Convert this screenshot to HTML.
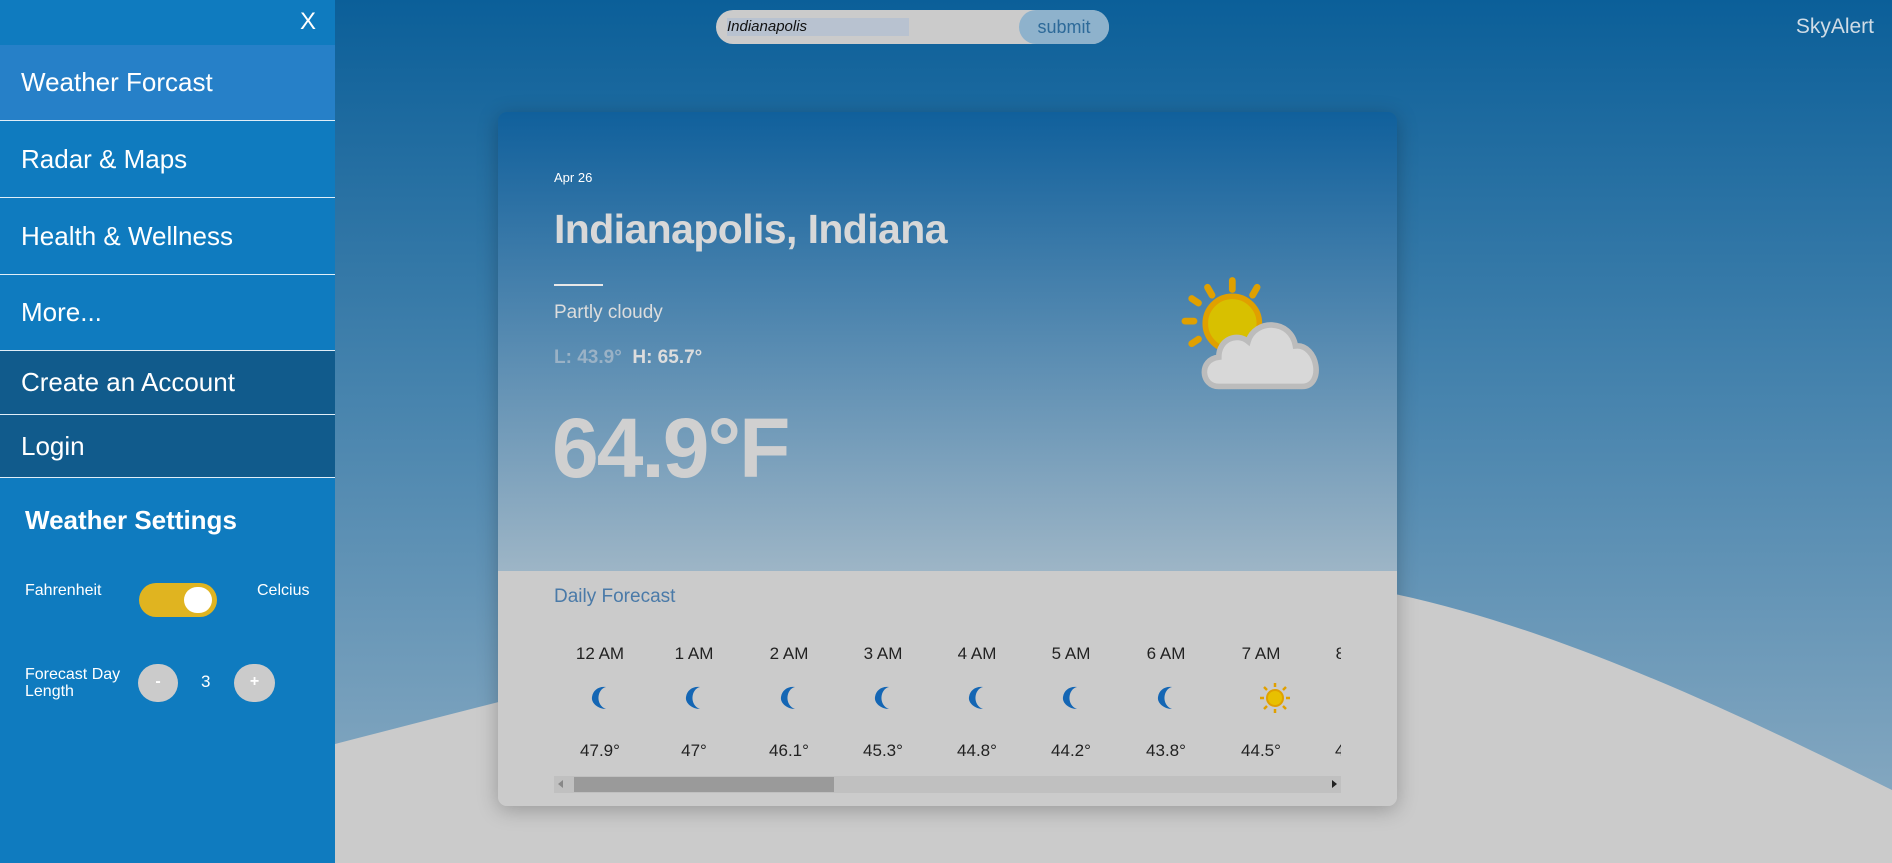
<!DOCTYPE html>
<html><head><meta charset="utf-8"><style>
*{margin:0;padding:0;box-sizing:border-box}
body{width:1892px;height:863px;overflow:hidden;position:relative;font-family:"Liberation Sans",sans-serif;background:linear-gradient(#0b5f99 0%,#3f7fab 40%,#8eadc3 100%)}
.abs{position:absolute}
#side{left:0;top:0;width:335px;height:863px;background:#0f7bbf;color:#fff}
.item{position:absolute;left:0;width:335px;border-bottom:1px solid #e0eef8;font-size:26px;padding-left:21px;display:flex;align-items:center}
.card{left:498px;top:112px;width:899px;height:694px;border-radius:9px;overflow:hidden;box-shadow:0 4px 20px rgba(0,0,0,.25)}
.top{position:absolute;left:0;top:0;width:899px;height:459px;background:linear-gradient(#10609c,#9db5c6)}
.bot{position:absolute;left:0;top:459px;width:899px;height:235px;background:#cbcbcb}
.t{position:absolute;color:#222;font-size:17px;text-align:center;width:80px}
</style></head><body>
<svg class="abs" style="left:0;top:0" width="1892" height="863"><path d="M335,744 C700,650 1000,570 1300,580 C1500,595 1750,720 1892,790 L1892,863 L335,863 Z" fill="#cbcbcb"/></svg>

<div class="abs" style="left:716px;top:10px;width:393px;height:34px;border-radius:17px;background:#cbcbcb"></div>
<div class="abs" style="left:727px;top:18px;width:182px;height:18px;background:#b8c2d0;font-style:italic;font-size:15px;line-height:18px;color:#111">Indianapolis</div>
<div class="abs" style="left:1019px;top:10px;width:90px;height:34px;border-radius:17px;background:#8eb2cc;color:#2d6a99;font-size:18px;line-height:34px;text-align:center">submit</div>
<div class="abs" style="right:18px;top:15px;color:#d0dce6;font-size:21px">SkyAlert</div>

<div class="abs card">
<div class="top"></div><div class="bot"></div>
<div class="abs" style="left:56px;top:58px;color:#fff;font-size:13px">Apr 26</div>
<div class="abs" style="left:56px;top:94px;color:#d8d8d8;font-size:41px;font-weight:bold;letter-spacing:-0.6px">Indianapolis, Indiana</div>
<div class="abs" style="left:56px;top:172px;width:49px;height:2px;background:#e8e8e8"></div>
<div class="abs" style="left:56px;top:190px;color:#ddd;font-size:19px">Partly cloudy</div>
<div class="abs" style="left:56px;top:235px;font-size:19px;font-weight:bold"><span style="color:#9ab2c6">L: 43.9°</span>&nbsp; <span style="color:#ddd">H: 65.7°</span></div>
<div class="abs" style="left:54px;top:288px;color:#d0d0d0;font-size:84px;font-weight:bold;letter-spacing:-2px">64.9°F</div>
<svg class="abs" style="left:682px;top:164px" width="170" height="124" viewBox="0 0 150 110">
<g stroke="#e0a000" stroke-width="6" stroke-linecap="round"><line x1="46" y1="4" x2="46" y2="12"/><line x1="24" y1="10" x2="28" y2="17"/><line x1="68" y1="10" x2="64" y2="17"/><line x1="4" y1="40" x2="12" y2="40"/><line x1="10" y1="20" x2="16" y2="24"/><line x1="10" y1="60" x2="16" y2="56"/></g>
<circle cx="46" cy="42" r="24" fill="#d8c000" stroke="#e0a000" stroke-width="5"/>
<path d="M34,98 C18,98 16,74 34,72 C34,56 50,50 60,58 C66,38 98,38 102,62 C122,60 128,98 108,98 Z" fill="#d8d8d8" stroke="#bcbcbc" stroke-width="5"/>
</svg>
<div class="abs" style="left:56px;top:474px;color:#4a7aa8;font-size:19px">Daily Forecast</div>
<div class="abs" style="left:56px;top:520px;width:787px;height:144px;overflow:hidden">
<div class="t" style="left:6px;top:12px">12 AM</div><div class="t" style="left:100px;top:12px">1 AM</div><div class="t" style="left:195px;top:12px">2 AM</div><div class="t" style="left:289px;top:12px">3 AM</div><div class="t" style="left:383px;top:12px">4 AM</div><div class="t" style="left:477px;top:12px">5 AM</div><div class="t" style="left:572px;top:12px">6 AM</div><div class="t" style="left:667px;top:12px">7 AM</div><div class="t" style="left:761px;top:12px">8 AM</div>
<div class="t" style="left:6px;top:109px">47.9°</div><div class="t" style="left:100px;top:109px">47°</div><div class="t" style="left:195px;top:109px">46.1°</div><div class="t" style="left:289px;top:109px">45.3°</div><div class="t" style="left:383px;top:109px">44.8°</div><div class="t" style="left:477px;top:109px">44.2°</div><div class="t" style="left:572px;top:109px">43.8°</div><div class="t" style="left:667px;top:109px">44.5°</div><div class="t" style="left:761px;top:109px">44.6°</div>
<svg class="abs" style="left:16px;top:47px" width="900" height="40">
<g fill="#1466b4">
<path id="m" d="M36,8 C27,10 25,26 36,30 C28,30 21,24 22,18 C23,11 29,7 36,8 Z"/>
<use href="#m" x="94"/><use href="#m" x="189"/><use href="#m" x="283"/><use href="#m" x="377"/><use href="#m" x="471"/><use href="#m" x="566"/>
</g>
<g transform="translate(705,19)"><circle r="8" fill="#e8c000" stroke="#e0a000" stroke-width="2"/><g stroke="#e0a000" stroke-width="2.5"><line x1="0" y1="-11" x2="0" y2="-15"/><line x1="0" y1="11" x2="0" y2="15"/><line x1="-11" y1="0" x2="-15" y2="0"/><line x1="11" y1="0" x2="15" y2="0"/><line x1="8" y1="8" x2="11" y2="11"/><line x1="-8" y1="-8" x2="-11" y2="-11"/><line x1="8" y1="-8" x2="11" y2="-11"/><line x1="-8" y1="8" x2="-11" y2="11"/></g></g>
<g transform="translate(799,19)"><circle r="8" fill="#e8c000" stroke="#e0a000" stroke-width="2"/><line x1="-11" y1="0" x2="-15" y2="0" stroke="#e0a000" stroke-width="2.5"/></g>
</svg>
</div>
<div class="abs" style="left:56px;top:664px;width:787px;height:17px;background:#c0c0c0"></div>
<div class="abs" style="left:76px;top:665px;width:260px;height:15px;background:#9a9a9a"></div>
<div class="abs" style="left:60px;top:668px;border-right:5px solid #888;border-top:4px solid transparent;border-bottom:4px solid transparent"></div>
<div class="abs" style="left:834px;top:668px;border-left:5px solid #222;border-top:4px solid transparent;border-bottom:4px solid transparent"></div>
</div>

<div id="side" class="abs">
<div class="abs" style="left:300px;top:8px;font-size:24px">X</div>
<div class="item" style="top:45px;height:76px;background:#2680c8">Weather Forcast</div>
<div class="item" style="top:121px;height:77px">Radar &amp; Maps</div>
<div class="item" style="top:198px;height:77px">Health &amp; Wellness</div>
<div class="item" style="top:275px;height:76px">More...</div>
<div class="item" style="top:351px;height:64px;background:#115b8c">Create an Account</div>
<div class="item" style="top:415px;height:63px;background:#115b8c">Login</div>
<div class="abs" style="left:25px;top:505px;font-size:26px;font-weight:bold">Weather Settings</div>
<div class="abs" style="left:25px;top:582px;font-size:16px">Fahrenheit</div>
<div class="abs" style="left:139px;top:583px;width:78px;height:34px;border-radius:17px;background:#e0b420"></div>
<div class="abs" style="left:184px;top:587px;width:28px;height:26px;border-radius:14px;background:#fff"></div>
<div class="abs" style="left:257px;top:582px;font-size:16px">Celcius</div>
<div class="abs" style="left:25px;top:666px;font-size:16px;line-height:17px">Forecast Day<br>Length</div>
<div class="abs" style="left:138px;top:664px;width:40px;height:38px;border-radius:20px;background:#cbcbcb;text-align:center;line-height:36px;font-weight:bold;font-size:16px">-</div>
<div class="abs" style="left:201px;top:672px;font-size:17px">3</div>
<div class="abs" style="left:234px;top:664px;width:41px;height:38px;border-radius:20px;background:#cbcbcb;text-align:center;line-height:36px;font-weight:bold;font-size:16px">+</div>
</div>
</body></html>
